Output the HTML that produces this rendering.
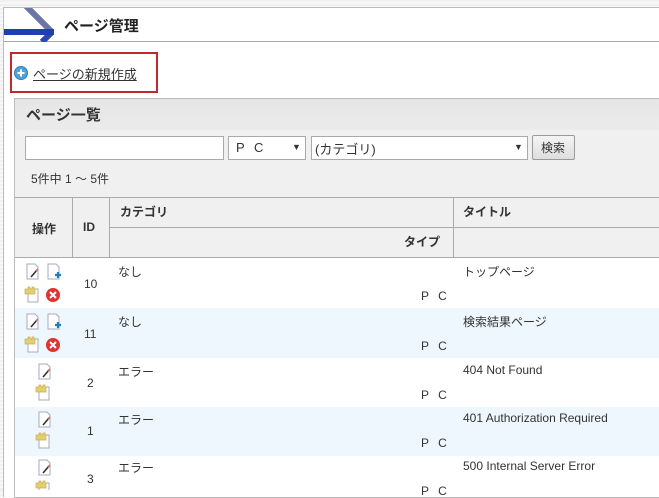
<!DOCTYPE html>
<html><head><meta charset="utf-8"><style>
*{margin:0;padding:0;box-sizing:border-box}
body{width:659px;height:490px;overflow:hidden;position:relative;font-family:"Liberation Sans","Noto Sans CJK JP",sans-serif;font-size:12px;color:#333;background:repeating-linear-gradient(#f0f0f0 0 2px,#f8f8f8 2px 4px)}
.a{position:absolute}
.t{position:absolute;white-space:nowrap}
</style></head><body>
<div class="a" style="left:3px;top:7px;width:660px;height:490px;background:#fff;border:1px solid #bbb;border-right:none;border-bottom:none"></div>
<div class="a" style="left:4px;top:8px;width:655px;height:34px;background:#fff;border-bottom:1px solid #aaa"></div>
<svg class="a" style="left:4px;top:8px" width="54" height="34"><path d="M22 -2 L48 24" stroke="#6a76a8" stroke-width="6" fill="none"/><path d="M48 24 L38 34" stroke="#2a48b0" stroke-width="6" fill="none"/><path d="M0 24 L50 24" stroke="#1d3fb0" stroke-width="6"/></svg>
<div class="t" style="left:64px;top:15px;font-size:15px;font-weight:bold;color:#222">ページ管理</div>
<div class="a" style="left:10px;top:52px;width:148px;height:41px;border:2px solid #c0282d"></div>
<svg class="a" style="left:14px;top:66px" width="14" height="14"><circle cx="7" cy="7" r="6.5" fill="#4fa3d8" stroke="#2f80b8"/><path d="M7 3.5v7M3.5 7h7" stroke="#fff" stroke-width="2"/></svg>
<div class="t" style="left:33px;top:64px;font-size:13px;text-decoration:underline;color:#333">ページの新規作成</div>
<div class="a" style="left:14px;top:98px;width:650px;height:400px;background:#fff;border:1px solid #bbb"></div>
<div class="a" style="left:15px;top:99px;width:644px;height:31px;background:linear-gradient(#e6e6e6,#ebebeb)"></div>
<div class="t" style="left:26px;top:104px;font-size:15px;font-weight:bold;color:#333">ページ一覧</div>
<div class="a" style="left:15px;top:130px;width:644px;height:67px;background:#f0f0f0"></div>
<div class="a" style="left:25px;top:136px;width:199px;height:24px;background:#fff;border:1px solid #aaa"></div>
<div class="a" style="left:228px;top:136px;width:78px;height:24px;background:#fff;border:1px solid #aaa"></div>
<div class="t" style="left:236px;top:140px;font-size:13px;letter-spacing:3px">P C</div>
<div class="t" style="left:292px;top:142px;font-size:9px">▼</div>
<div class="a" style="left:311px;top:136px;width:217px;height:24px;background:#fff;border:1px solid #aaa"></div>
<div class="t" style="left:315px;top:139px;font-size:13px">(カテゴリ)</div>
<div class="t" style="left:514px;top:142px;font-size:9px">▼</div>
<div class="a" style="left:532px;top:135px;width:43px;height:25px;background:linear-gradient(#f4f4f4,#dedede);border:1px solid #999;border-radius:2px"></div>
<div class="t" style="left:541px;top:139px;font-size:12px">検索</div>
<div class="t" style="left:31px;top:170px;font-size:12px">5件中 1 ～ 5件</div>
<div class="a" style="left:15px;top:197px;width:644px;height:61px;background:#f0f0f0;border-top:1px solid #aaa;border-bottom:1px solid #aaa"></div>
<div class="a" style="left:72px;top:197px;width:1px;height:61px;background:#aaa"></div>
<div class="a" style="left:109px;top:197px;width:1px;height:61px;background:#aaa"></div>
<div class="a" style="left:453px;top:197px;width:1px;height:61px;background:#aaa"></div>
<div class="a" style="left:109px;top:227px;width:550px;height:1px;background:#aaa"></div>
<div class="t" style="left:32px;top:220px;font-weight:bold">操作</div>
<div class="t" style="left:83px;top:220px;font-weight:bold">ID</div>
<div class="t" style="left:120px;top:203px;font-weight:bold">カテゴリ</div>
<div class="t" style="left:404px;top:233px;font-weight:bold">タイプ</div>
<div class="t" style="left:463px;top:203px;font-weight:bold">タイトル</div>
<div class="a" style="left:15px;top:308px;width:644px;height:50px;background:#eef7fe"></div>
<div class="a" style="left:15px;top:407px;width:644px;height:49px;background:#eef7fe"></div>
<div class="t" style="left:118px;top:263px">なし</div><div class="t" style="left:84px;top:277px">10</div><div class="t" style="left:421px;top:289px;letter-spacing:3px">P C</div><div class="t" style="left:463px;top:263px">トップページ</div>
<div class="t" style="left:118px;top:313px">なし</div><div class="t" style="left:84px;top:327px">11</div><div class="t" style="left:421px;top:339px;letter-spacing:3px">P C</div><div class="t" style="left:463px;top:313px">検索結果ページ</div>
<div class="t" style="left:118px;top:363px">エラー</div><div class="t" style="left:87px;top:376px">2</div><div class="t" style="left:421px;top:388px;letter-spacing:3px">P C</div><div class="t" style="left:463px;top:363px">404 Not Found</div>
<div class="t" style="left:118px;top:411px">エラー</div><div class="t" style="left:87px;top:424px">1</div><div class="t" style="left:421px;top:436px;letter-spacing:3px">P C</div><div class="t" style="left:463px;top:411px">401 Authorization Required</div>
<div class="t" style="left:118px;top:459px">エラー</div><div class="t" style="left:87px;top:472px">3</div><div class="t" style="left:421px;top:484px;letter-spacing:3px">P C</div><div class="t" style="left:463px;top:459px">500 Internal Server Error</div>
<svg class="a" style="left:0;top:0" width="80" height="490">
<defs>
<g id="ed"><path d="M1 0h8l3 3v12h-11z" fill="#fff" stroke="#aab"/><path d="M5 13l6-7" stroke="#333" stroke-width="1.6"/><path d="M10 7l2-2" stroke="#d66" stroke-width="1.6"/></g>
<g id="nw"><path d="M1 0h8l3 3v12h-11z" fill="#fff" stroke="#aab"/><path d="M8 11h6M11 8v6" stroke="#1a7fc0" stroke-width="2.2"/></g>
<g id="cp"><path d="M3 2h10v13h-10z" fill="#fff" stroke="#aab"/><path d="M0 2h3v-2h2v2h2v-2h2v2h1v5h-10z" fill="#e3cf70" stroke="#c8b050" stroke-width=".7"/></g>
<g id="dl"><circle cx="7" cy="7" r="7" fill="#d33"/><path d="M4 4l6 6M10 4l-6 6" stroke="#fff" stroke-width="2"/></g>
</defs>
<use href="#ed" x="26" y="264"/><use href="#nw" x="47" y="264"/><use href="#cp" x="25" y="287"/><use href="#dl" x="46" y="288"/>
<use href="#ed" x="26" y="314"/><use href="#nw" x="47" y="314"/><use href="#cp" x="25" y="337"/><use href="#dl" x="46" y="338"/>
<use href="#ed" x="38" y="364"/><use href="#cp" x="36" y="385"/>
<use href="#ed" x="38" y="412"/><use href="#cp" x="36" y="433"/>
<use href="#ed" x="38" y="460"/><use href="#cp" x="36" y="481"/>
</svg>
</body></html>
